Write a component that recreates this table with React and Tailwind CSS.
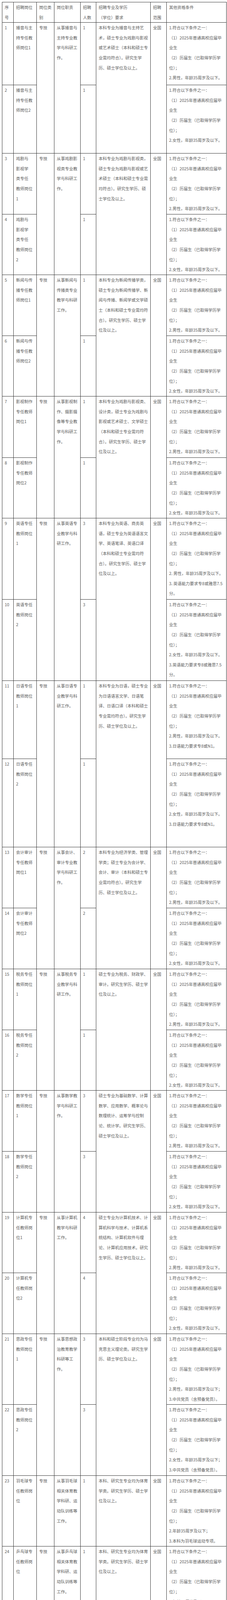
const std = [
	'1.符合以下条件之一：',
	'（1）2025年普通高校应届毕',
	'业生',
	'（2）历届生（已取得学历学',
	'位）；',
];
const male = [...std, '2.男性，年龄35周岁及以下。'];
const female = [...std, '2.女性，年龄35周岁及以下。'];

const sportMajor = ['本科、研究生专业均为体育', '学类。研究生学历、硕士学', '位及以上。'];

// 两行一组，岗位类别 / 职责 / 专业 / 范围 合并
const groups = [
	{
		duty: ['从事播音与', '主持专业教', '学与科研工', '作。'],
		major: ['本科专业为播音与主持艺', '术，硕士专业为戏剧与影视', '或艺术硕士（本科和硕士专', '业需均符合）。研究生学', '历、硕士学位及以上。'],
		rows: [
			{ no: '1', post: ['播音与主', '持专任教', '师岗位1'], num: '1', cond: male, h: 'h-[160px]' },
			{ no: '2', post: ['播音与主', '持专任教', '师岗位2'], num: '1', cond: female, h: 'h-[175px]' },
		],
	},
	{
		duty: ['从事戏剧影', '视类专业教', '学与科研工', '作。'],
		major: ['本科专业为戏剧与影视类，', '硕士专业为戏剧与影视或艺', '术硕士（本科和硕士专业需', '均符合）。研究生学历、硕', '士学位及以上。'],
		rows: [
			{ no: '3', post: ['戏剧与', '影视学', '类专任', '教师岗位', '1'], num: '1', cond: male, h: 'h-[156px]' },
			{ no: '4', post: ['戏剧与', '影视学', '类专任', '教师岗位', '2'], num: '1', cond: female, h: 'h-[155px]' },
		],
	},
	{
		duty: ['从事新闻与', '传播类专业', '教学与科研', '工作。'],
		major: ['本科专业为新闻传播学类，', '硕士专业为新闻传播学、新', '闻与传播、新闻学或文学硕', '士（本科和硕士专业需均符', '合）。研究生学历、硕士学', '位及以上。'],
		rows: [
			{ no: '5', post: ['新闻与传', '播专任教', '师岗位1'], num: '1', cond: male, h: 'h-[156px]' },
			{ no: '6', post: ['新闻与传', '播专任教', '师岗位2'], num: '1', cond: female, h: 'h-[155px]' },
		],
	},
	{
		duty: ['从事影视制', '作、摄影摄', '像等专业教', '学与科研工', '作。'],
		major: ['本科专业为戏剧与影视类、', '设计类，硕士专业为戏剧与', '影视或艺术硕士、文学硕士', '（本科和硕士专业需均符', '合）。研究生学历、硕士学', '位及以上。'],
		rows: [
			{ no: '7', post: ['影视制作', '专任教师', '岗位1'], num: '1', cond: male, h: 'h-[157px]' },
			{ no: '8', post: ['影视制作', '专任教师', '岗位2'], num: '1', cond: female, h: 'h-[155px]' },
		],
	},
	{
		duty: ['从事英语专', '业教学与科', '研工作。'],
		major: ['本科专业为英语、商务英', '语，硕士专业为英语语言文', '学、英语笔译、英语口译', '（本科和硕士专业需均符', '合）。研究生学历、硕士学', '位及以上。'],
		rows: [
			{
				no: '9',
				post: ['英语专任', '教师岗位', '1'],
				num: '3',
				cond: [...std, '2. 男性，年龄35周岁及以下。', '3. 英语能力要求专8或雅思7.5', '分。'],
				h: 'h-[208px]',
			},
			{
				no: '10',
				post: ['英语专任', '教师岗位', '2'],
				num: '3',
				cond: [...std, '2.女性，年龄35周岁及以下。', '3.英语能力要求专8或雅思7.5', '分。'],
				h: 'h-[208px]',
			},
		],
	},
	{
		duty: ['从事日语专', '业教学与科', '研工作。'],
		major: ['本科专业为日语，硕士专业', '为日语语言文学、日语笔', '译、日语口译（本科和硕士', '专业需均符合）。研究生学', '历、硕士学位及以上。'],
		rows: [
			{ no: '11', post: ['日语专任', '教师岗位', '1'], num: '1', cond: [...male, '3.日语能力要求专8或N1。'], h: 'h-[200px]' },
			{ no: '12', post: ['日语专任', '教师岗位', '2'], num: '1', cond: [...female, '3.日语能力要求专8或N1。'], h: 'h-[226px]' },
		],
	},
	{
		duty: ['从事会计、', '审计专业教', '学与科研工', '作。'],
		major: ['本科专业为经济学类、管理', '学类；硕士专业为会计学、', '会计、审计（本科和硕士专', '业需均符合）。研究生学', '历、硕士学位及以上。'],
		rows: [
			{ no: '13', post: ['会计审计', '专任教师', '岗位1'], num: '2', cond: male, h: 'h-[156px]' },
			{ no: '14', post: ['会计审计', '专任教师', '岗位2'], num: '2', cond: female, h: 'h-[156px]' },
		],
	},
	{
		duty: ['从事税务专', '业教学与科', '研工作。'],
		major: ['硕士专业为税务、财政学、', '审计。研究生学历、硕士学', '位及以上。'],
		rows: [
			{ no: '15', post: ['税务专任', '教师岗位', '1'], num: '1', cond: male, h: 'h-[156px]' },
			{ no: '16', post: ['税务专任', '教师岗位', '2'], num: '1', cond: female, h: 'h-[155px]' },
		],
	},
	{
		duty: ['从事数学教', '学与科研工', '作。'],
		major: ['硕士专业为基础数学、计算', '数学、应用数学、概率论与', '数理统计、运筹学与控制', '论、统计学。研究生学历、', '硕士学位及以上。'],
		rows: [
			{ no: '17', post: ['数学专任', '教师岗位', '1'], num: '3', cond: male, h: 'h-[156px]' },
			{ no: '18', post: ['数学专任', '教师岗位', '2'], num: '3', cond: female, h: 'h-[156px]' },
		],
	},
	{
		duty: ['从事计算机', '教学与科研', '工作。'],
		major: ['硕士专业为计算机技术、计', '算机科学与技术、计算机系', '统结构、计算机软件与理', '论、计算机应用技术。研究', '生学历、硕士学位及以上。'],
		rows: [
			{ no: '19', post: ['计算机专', '任教师岗', '位1'], num: '4', cond: male, h: 'h-[155px]' },
			{ no: '20', post: ['计算机专', '任教师岗', '位2'], num: '4', cond: female, h: 'h-[156px]' },
		],
	},
	{
		duty: ['从事思想政', '治教育教学', '科研等工', '作。'],
		major: ['本科和硕士阶段专业均为马', '克思主义理论类。研究生学', '历、硕士学位及以上。'],
		rows: [
			{
				no: '21',
				post: ['思政专任', '教师岗位', '1'],
				num: '3',
				cond: [...std, '2.男性，年龄35周岁及以下；', '3.中共党员（含预备党员）。'],
				h: 'h-[181px]',
			},
			{
				no: '22',
				post: ['思政专任', '教师岗位', '2'],
				num: '3',
				cond: [...std, '2.女性，年龄35周岁及以下；', '3.中共党员（含预备党员）。'],
				h: 'h-[182px]',
			},
		],
	},
];

const singles = [
	{
		no: '23',
		post: ['羽毛球专', '任教师岗', '位'],
		duty: ['从事羽毛球', '相关体育教', '学科研、运', '动队训练等', '工作。'],
		num: '1',
		major: sportMajor,
		cond: [...std, '2.年龄35周岁及以下；', '3.本科为羽毛球运动专项。'],
		h: 'h-[181px]',
	},
	{
		no: '24',
		post: ['乒乓球专', '任教师岗', '位'],
		duty: ['从事乒乓球', '相关体育教', '学科研、运', '动队训练等', '工作。'],
		num: '1',
		major: sportMajor,
		cond: [...std, '2.年龄35周岁及以下；', '3.本科为乒乓球运动专项。'],
		h: 'h-[182px]',
	},
	{
		no: '25',
		post: ['足球专任', '教师岗位'],
		duty: ['从事足球相', '关体育教学', '科研、运动', '队训练等工', '作。'],
		num: '1',
		major: sportMajor,
		cond: [...std, '2.年龄35周岁及以下；', '3.本科为足球运动专项。'],
		h: 'h-[182px]',
	},
	{
		no: '26',
		post: ['田径专任', '教师岗位'],
		duty: ['从事田径相', '关体育教学', '科研、运动', '队训练等工', '作。'],
		num: '1',
		major: sportMajor,
		cond: [...std, '2.年龄35周岁及以下；', '3.本科为田径运动专项。'],
		h: 'h-[181px]',
	},
	{
		no: '27',
		tight: true,
		post: ['信息技术岗', '骨干岗位'],
		duty: ['从事学校信息', '系统项目管', '理、数据仓库', '建设、数据类', '平台建设及基', '础日常开发运', '维工作。'],
		num: '1',
		major: ['专业为计算机类。本科及以上', '学历。'],
		cond: ['1.45周岁及以下；', '2.具有信息系统项目管理师专业', '技术职务；', '3.具有五年及以上高校相关工作', '经历。'],
		h: 'h-[180px]',
	},
	{
		no: '28',
		tight: true,
		post: ['财务管理岗', '位'],
		duty: ['从事财务管理', '相关工作。'],
		num: '1',
		major: ['本科为财务管理专业。硕士及', '以上学位。'],
		cond: ['1.45周岁及以下；', '2.具有高级会计师专业技术职', '务；', '3.具有五年及以上机关事业单位', '财务工作经历。'],
		h: 'h-[131px]',
	},
	{
		no: '29',
		tight: true,
		post: ['财务会计类', '研究员岗位'],
		duty: ['从事财务、会', '计相关科研工', '作。'],
		num: '1',
		major: ['本科为财务管理、会计学专', '业。硕士及以上学位。'],
		cond: ['1.45周岁及以下；', '2. 具有副研究员及以上专业技术', '职务；', '3. 主持省部级项目1项。', '4.具有五年及以上高校相关工作', '经历。'],
		h: 'h-[157px]',
	},
];

const Cell = ({ lines, rowSpan, tight }) => (
	<td
		rowSpan={rowSpan}
		className={`border border-[#333] align-top p-0 font-['Noto_Sans_CJK_SC','Noto_Sans',sans-serif] text-[10.5px] leading-[25.6px] ${
			tight ? 'px-px text-[#474747]' : 'px-[6px] text-[#5e5e5e]'
		}`}>
		{lines.map((line, i) => (
			<div key={i} className="h-[25.6px] whitespace-nowrap">
				{line}
			</div>
		))}
	</td>
);

const header = [
	['序', '号'],
	['招聘岗位'],
	['岗位类', '别'],
	['岗位职责'],
	['招聘', '人数'],
	['招聘专业及学历', '（学位）要求'],
	['招聘', '范围'],
	['其他资格条件'],
];

const App = () => {
	return (
		<div className="h-[4974px] overflow-hidden bg-white pt-[5px] pl-[5px]">
			<table className="border-collapse table-fixed w-[573px]">
				<colgroup>
					<col className="w-[29px]" />
					<col className="w-[59px]" />
					<col className="w-[45px]" />
					<col className="w-[67px]" />
					<col className="w-[40px]" />
					<col className="w-[139px]" />
					<col className="w-[41px]" />
					<col className="w-[153px]" />
				</colgroup>
				<tbody>
					<tr className="h-[52px]">
						{header.map((lines, i) => (
							<Cell key={i} lines={lines} />
						))}
					</tr>
					{groups.map((g) =>
						g.rows.map((r, idx) => (
							<tr key={r.no} className={r.h}>
								<Cell lines={[r.no]} />
								<Cell lines={r.post} />
								{idx === 0 && <Cell lines={['专技']} rowSpan={2} />}
								{idx === 0 && <Cell lines={g.duty} rowSpan={2} />}
								<Cell lines={[r.num]} />
								{idx === 0 && <Cell lines={g.major} rowSpan={2} />}
								{idx === 0 && <Cell lines={['全国']} rowSpan={2} />}
								<Cell lines={r.cond} />
							</tr>
						)),
					)}
					{singles.map((r) => (
						<tr key={r.no} className={r.h}>
							<Cell lines={[r.no]} tight={r.tight} />
							<Cell lines={r.post} tight={r.tight} />
							<Cell lines={['专技']} tight={r.tight} />
							<Cell lines={r.duty} tight={r.tight} />
							<Cell lines={[r.num]} tight={r.tight} />
							<Cell lines={r.major} tight={r.tight} />
							<Cell lines={['全国']} tight={r.tight} />
							<Cell lines={r.cond} tight={r.tight} />
						</tr>
					))}
				</tbody>
			</table>
		</div>
	);
};

export default App;
